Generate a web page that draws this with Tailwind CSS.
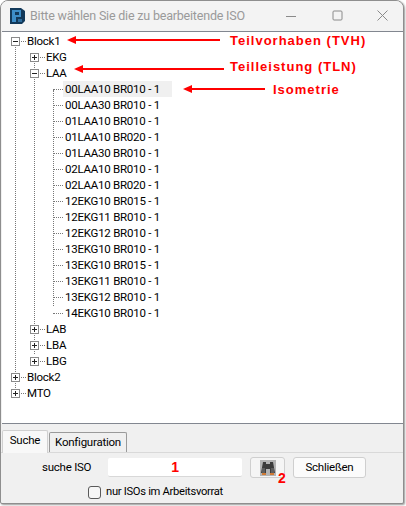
<!DOCTYPE html>
<html><head><meta charset="utf-8"><script src="https://cdn.jsdelivr.net/npm/@tailwindcss/browser@4"></script></head>
<body class="w-[406px] h-[506px] bg-white overflow-hidden font-['Roboto','Noto_Sans',sans-serif] text-[11.5px] tracking-[-0.24px] text-black">
<div class="relative w-[404px] h-[504px] bg-[#f0f0f0] border border-[#8e8e8e] rounded-t-[8px] rounded-b-[2px] shadow-[1px_1px_2px_rgba(0,0,0,0.4)] flex flex-col overflow-hidden">
  <div class="h-[30px] shrink-0 bg-[#f3f3f3] flex items-center relative">
    <svg class="ml-[9px]" width="15" height="16" viewBox="0 0 15 16"><path d="M0 0h11l4 3v10l-3 3H0z" fill="#12395a"/><path d="M2 2h9v7H6v5H2z M5 4v3h4V4z" fill="#3d8ec9" fill-rule="evenodd"/><path d="M8 11h4v3H8z" fill="#2d6c9d"/></svg>
    <span class="ml-[5px] text-[#9a9a9a] text-[12.5px] tracking-[-0.2px]">Bitte wählen Sie die zu bearbeitende ISO</span>
    <svg class="absolute left-[285px] top-[10px]" width="11" height="11" viewBox="0 0 11 11"><path d="M0 5.500h10" stroke="#8a8a8a"/></svg>
    <svg class="absolute left-[331px] top-[9px]" width="11" height="11" viewBox="0 0 11 11"><rect x="1" y="1" width="9" height="9" rx="1" fill="none" stroke="#8a8a8a"/></svg>
    <svg class="absolute left-[376px] top-[9px]" width="11" height="11" viewBox="0 0 11 11"><path d="M.5.500l10 10M10.500.500l-10 10" stroke="#8a8a8a"/></svg>
  </div>
  <div class="h-[393px] shrink-0 ml-[1px] bg-white border-y border-[#828790] relative">
    <div class="absolute left-[13px] top-[10px] h-[350px] border-l border-dotted border-[#777]"></div>
    <div class="absolute left-[32px] top-[26px] h-[296px] border-l border-dotted border-[#777]"></div>
    <div class="absolute left-[51px] top-[58px] h-[216px] border-l border-dotted border-[#777]"></div>
    <div class="relative flex flex-col pt-[1px] leading-[16px]">
      <div class="h-[16px] flex items-center pl-[9px]"><span class="w-[9px] h-[9px] border border-[#8a8a8a] bg-white flex items-center justify-center"><span class="w-[5px] h-[1px] bg-[#222]"></span></span><span class="w-[5px] ml-[1px] border-t border-dotted border-[#777]"></span><span class="ml-[1px]">Block1</span></div>
      <div class="h-[16px] flex items-center pl-[28px]"><span class="relative w-[9px] h-[9px] border border-[#8a8a8a] bg-white flex items-center justify-center"><span class="w-[5px] h-[1px] bg-[#222]"></span><span class="absolute w-[1px] h-[5px] bg-[#222]"></span></span><span class="w-[5px] ml-[1px] border-t border-dotted border-[#777]"></span><span class="ml-[1px]">EKG</span></div>
      <div class="h-[16px] flex items-center pl-[28px]"><span class="w-[9px] h-[9px] border border-[#8a8a8a] bg-white flex items-center justify-center"><span class="w-[5px] h-[1px] bg-[#222]"></span></span><span class="w-[5px] ml-[1px] border-t border-dotted border-[#777]"></span><span class="ml-[1px]">LAA</span></div>
      <div class="h-[16px] flex items-center pl-[51px]"><span class="w-[10px] border-t border-dotted border-[#777]"></span><span class="w-[109px] h-[16px] pl-[2px] bg-[#f0f0f0]">00LAA10 BR010 - 1</span></div>
      <div class="h-[16px] flex items-center pl-[51px]"><span class="w-[10px] border-t border-dotted border-[#777]"></span><span class="pl-[2px]">00LAA30 BR010 - 1</span></div>
      <div class="h-[16px] flex items-center pl-[51px]"><span class="w-[10px] border-t border-dotted border-[#777]"></span><span class="pl-[2px]">01LAA10 BR010 - 1</span></div>
      <div class="h-[16px] flex items-center pl-[51px]"><span class="w-[10px] border-t border-dotted border-[#777]"></span><span class="pl-[2px]">01LAA10 BR020 - 1</span></div>
      <div class="h-[16px] flex items-center pl-[51px]"><span class="w-[10px] border-t border-dotted border-[#777]"></span><span class="pl-[2px]">01LAA30 BR010 - 1</span></div>
      <div class="h-[16px] flex items-center pl-[51px]"><span class="w-[10px] border-t border-dotted border-[#777]"></span><span class="pl-[2px]">02LAA10 BR010 - 1</span></div>
      <div class="h-[16px] flex items-center pl-[51px]"><span class="w-[10px] border-t border-dotted border-[#777]"></span><span class="pl-[2px]">02LAA10 BR020 - 1</span></div>
      <div class="h-[16px] flex items-center pl-[51px]"><span class="w-[10px] border-t border-dotted border-[#777]"></span><span class="pl-[2px]">12EKG10 BR015 - 1</span></div>
      <div class="h-[16px] flex items-center pl-[51px]"><span class="w-[10px] border-t border-dotted border-[#777]"></span><span class="pl-[2px]">12EKG11 BR010 - 1</span></div>
      <div class="h-[16px] flex items-center pl-[51px]"><span class="w-[10px] border-t border-dotted border-[#777]"></span><span class="pl-[2px]">12EKG12 BR010 - 1</span></div>
      <div class="h-[16px] flex items-center pl-[51px]"><span class="w-[10px] border-t border-dotted border-[#777]"></span><span class="pl-[2px]">13EKG10 BR010 - 1</span></div>
      <div class="h-[16px] flex items-center pl-[51px]"><span class="w-[10px] border-t border-dotted border-[#777]"></span><span class="pl-[2px]">13EKG10 BR015 - 1</span></div>
      <div class="h-[16px] flex items-center pl-[51px]"><span class="w-[10px] border-t border-dotted border-[#777]"></span><span class="pl-[2px]">13EKG11 BR010 - 1</span></div>
      <div class="h-[16px] flex items-center pl-[51px]"><span class="w-[10px] border-t border-dotted border-[#777]"></span><span class="pl-[2px]">13EKG12 BR010 - 1</span></div>
      <div class="h-[16px] flex items-center pl-[51px]"><span class="w-[10px] border-t border-dotted border-[#777]"></span><span class="pl-[2px]">14EKG10 BR010 - 1</span></div>
      <div class="h-[16px] flex items-center pl-[28px]"><span class="relative w-[9px] h-[9px] border border-[#8a8a8a] bg-white flex items-center justify-center"><span class="w-[5px] h-[1px] bg-[#222]"></span><span class="absolute w-[1px] h-[5px] bg-[#222]"></span></span><span class="w-[5px] ml-[1px] border-t border-dotted border-[#777]"></span><span class="ml-[1px]">LAB</span></div>
      <div class="h-[16px] flex items-center pl-[28px]"><span class="relative w-[9px] h-[9px] border border-[#8a8a8a] bg-white flex items-center justify-center"><span class="w-[5px] h-[1px] bg-[#222]"></span><span class="absolute w-[1px] h-[5px] bg-[#222]"></span></span><span class="w-[5px] ml-[1px] border-t border-dotted border-[#777]"></span><span class="ml-[1px]">LBA</span></div>
      <div class="h-[16px] flex items-center pl-[28px]"><span class="relative w-[9px] h-[9px] border border-[#8a8a8a] bg-white flex items-center justify-center"><span class="w-[5px] h-[1px] bg-[#222]"></span><span class="absolute w-[1px] h-[5px] bg-[#222]"></span></span><span class="w-[5px] ml-[1px] border-t border-dotted border-[#777]"></span><span class="ml-[1px]">LBG</span></div>
      <div class="h-[16px] flex items-center pl-[9px]"><span class="relative w-[9px] h-[9px] border border-[#8a8a8a] bg-white flex items-center justify-center"><span class="w-[5px] h-[1px] bg-[#222]"></span><span class="absolute w-[1px] h-[5px] bg-[#222]"></span></span><span class="w-[5px] ml-[1px] border-t border-dotted border-[#777]"></span><span class="ml-[1px]">Block2</span></div>
      <div class="h-[16px] flex items-center pl-[9px]"><span class="relative w-[9px] h-[9px] border border-[#8a8a8a] bg-white flex items-center justify-center"><span class="w-[5px] h-[1px] bg-[#222]"></span><span class="absolute w-[1px] h-[5px] bg-[#222]"></span></span><span class="w-[5px] ml-[1px] border-t border-dotted border-[#777]"></span><span class="ml-[1px]">MTO</span></div>
    </div>
    <svg class="absolute left-0 top-0" width="400" height="100" viewBox="0 0 400 100">
      <path d="M72 8h146M79 37h143M188 57h75" stroke="#f00" stroke-width="2"/>
      <path d="M65 8l9-4v8zM72 37l9-4v8zM181 57l9-4v8z" fill="#f00"/>
    </svg>
    <span class="absolute left-[228px] top-[-1px] text-[#f00] text-[13px] font-bold tracking-[1px] font-['Liberation_Sans',sans-serif]">Teilvorhaben (TVH)</span>
    <span class="absolute left-[228px] top-[25px] text-[#f00] text-[13px] font-bold tracking-[1px] font-['Liberation_Sans',sans-serif]">Teilleistung (TLN)</span>
    <span class="absolute left-[271px] top-[48px] text-[#f00] text-[13px] font-bold tracking-[1px] font-['Liberation_Sans',sans-serif]">Isometrie</span>
  </div>
  <div class="flex-1 relative">
    <div class="flex items-end h-[28px] pl-[1px]">
      <div class="h-[23px] w-[46px] bg-[#f8f8f8] border border-b-0 border-[#d0d0d0] rounded-t-[2px] flex items-center justify-center relative z-10 mb-[-1px] pb-[2px]">Suche</div>
      <div class="h-[20px] w-[78px] ml-[1px] bg-[#f0f0f0] border border-b-0 border-[#9a9a9a] rounded-t-[2px] flex items-center justify-center">Konfiguration</div>
    </div>
    <div class="h-[52px] border-t border-[#d9d9d9] relative flex flex-col">
      <div class="flex items-center h-[26px] pt-[3px]">
        <span class="ml-[41px] w-[66px]">suche ISO</span>
        <div class="w-[134px] h-[19px] bg-white border-b border-[#d8d8d8] rounded-[2px] flex items-center justify-center text-[#f00] text-[14px] font-bold font-['Liberation_Sans',sans-serif]">1</div>
        <button class="ml-[8px] w-[35px] h-[21px] bg-[#f5f5f5] border border-[#cfcfcf] rounded-[3px] flex items-center justify-center">
          <svg width="16" height="16" viewBox="0 0 16 16"><rect width="16" height="16" fill="#b4b4b4"/><path d="M3 2h3v2h4V2h3l2 11h-5V9H6v4H1z" fill="#3c3c3c"/><path d="M2 8h3v5H2zM11 8h3v5h-3z" fill="#5e5e5e"/><rect x="2" y="13" width="4" height="2" fill="#d07a34"/><rect x="10" y="13" width="4" height="2" fill="#d07a34"/></svg>
        </button>
        <button class="ml-[8px] w-[73px] h-[21px] bg-[#fbfbfb] border border-[#cfcfcf] rounded-[3px] flex items-center justify-center">Schließen</button>
      </div>
      <div class="flex items-center h-[20px] pl-[87px] mt-[3px]">
        <span class="w-[13px] h-[13px] bg-[#f6f6f6] border border-[#5a5a5a] rounded-[3px]"></span>
        <span class="ml-[5px] text-[11.2px] tracking-[-0.3px]">nur ISOs im Arbeitsvorrat</span>
      </div>
      <span class="absolute left-[277px] top-[17px] text-[#f00] text-[14px] font-bold leading-[16px] font-['Liberation_Sans',sans-serif]">2</span>
    </div>
  </div>
</div>
</body></html>
